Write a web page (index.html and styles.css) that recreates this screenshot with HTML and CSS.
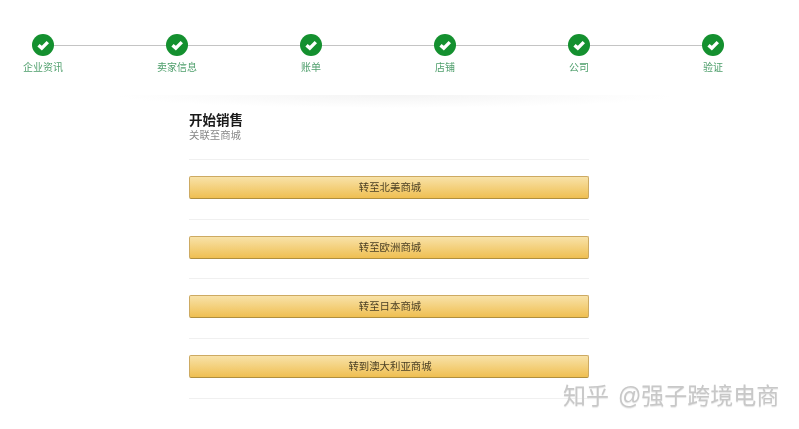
FILE: index.html
```html
<!DOCTYPE html>
<html lang="zh-CN">
<head>
  <meta charset="UTF-8">
  <meta name="viewport" content="width=device-width, initial-scale=1.0">
  <title>开始销售</title>
  <link rel="stylesheet" href="styles.css">
</head>
<body>
  <div class="steps">
    <div class="step"><svg class="step_icon" viewBox="0 0 22 22"><circle cx="11" cy="11" r="11"/><path d="M6.5 11.2l3.3 2.9 6-6"/></svg><span>企业资讯</span></div>
    <div class="step"><svg class="step_icon" viewBox="0 0 22 22"><circle cx="11" cy="11" r="11"/><path d="M6.5 11.2l3.3 2.9 6-6"/></svg><span>卖家信息</span></div>
    <div class="step"><svg class="step_icon" viewBox="0 0 22 22"><circle cx="11" cy="11" r="11"/><path d="M6.5 11.2l3.3 2.9 6-6"/></svg><span>账单</span></div>
    <div class="step"><svg class="step_icon" viewBox="0 0 22 22"><circle cx="11" cy="11" r="11"/><path d="M6.5 11.2l3.3 2.9 6-6"/></svg><span>店铺</span></div>
    <div class="step"><svg class="step_icon" viewBox="0 0 22 22"><circle cx="11" cy="11" r="11"/><path d="M6.5 11.2l3.3 2.9 6-6"/></svg><span>公司</span></div>
    <div class="step"><svg class="step_icon" viewBox="0 0 22 22"><circle cx="11" cy="11" r="11"/><path d="M6.5 11.2l3.3 2.9 6-6"/></svg><span>验证</span></div>
  </div>

  <div class="shade"></div>

  <div class="panel">
    <h1 class="title">开始销售</h1>
    <p class="subtitle">关联至商城</p>
    <div class="market"><button class="market_btn">转至北美商城</button></div>
    <div class="market"><button class="market_btn">转至欧洲商城</button></div>
    <div class="market"><button class="market_btn">转至日本商城</button></div>
    <div class="market"><button class="market_btn">转到澳大利亚商城</button></div>
  </div>

  <div class="watermark"><span>知乎</span><span>@强子跨境电商</span></div>
</body>
</html>
```

FILE: styles.css
```css
* {
  box-sizing: border-box;
  font-family: "Liberation Sans", "Noto Sans CJK SC", sans-serif;
}

html, body {
  height: 100%;
}

body {
  margin: 0;
  background: #fff;
  position: relative;
  overflow: hidden;
}

.steps {
  display: flex;
  justify-content: space-between;
  width: 750px;
  margin-left: 3px;
  padding-top: 34px;
  filter: blur(0.4px);
}

.step {
  position: relative;
  display: flex;
  flex-direction: column;
  align-items: center;
  width: 80px;
  color: #4f9f6c;
  font-size: 10px;
  line-height: 14px;
}

.step:not(:last-child)::after {
  content: "";
  position: absolute;
  top: 11px;
  left: 50%;
  width: 134px;
  height: 1px;
  background: #c4c4c4;
}

.step_icon {
  position: relative;
  z-index: 1;
  width: 22px;
  height: 22px;
  margin-bottom: 5px;
}

.step_icon circle {
  fill: #14902f;
}

.step_icon path {
  fill: none;
  stroke: #fff;
  stroke-width: 3.4;
}

.shade {
  width: 560px;
  height: 13px;
  margin: 20px 0 0 115px;
  background: radial-gradient(ellipse 50% 100% at 50% 0, #f4f4f4, #fff);
}

.panel {
  width: 400px;
  margin-left: 189px;
  margin-top: 5px;
  filter: blur(0.4px);
}

.title {
  margin: 0;
  color: #1a1a1a;
  font-size: 13.5px;
  line-height: 16px;
}

.subtitle {
  margin: 0;
  color: #888;
  font-size: 10.4px;
  line-height: 13px;
  padding-bottom: 17px;
}

.market {
  border-top: 1px solid #f0f0f0;
  padding: 16px 0 20px;
  height: 59.7px;
}

.market:last-child {
  border-bottom: 1px solid #f0f0f0;
  height: 60.7px;
}

.market_btn {
  display: block;
  width: 100%;
  height: 23px;
  padding: 0 0 2px 2px;
  border: 1px solid #cdaa62;
  border-bottom-color: #b08f3e;
  border-radius: 2px;
  background: linear-gradient(#f8e2a8, #efbf52);
  color: #4a3f24;
  font-size: 10.4px;
}

.watermark {
  position: absolute;
  left: 563px;
  top: 382px;
  display: flex;
  gap: 9px;
  color: #c8c8c8;
  font-size: 23px;
  line-height: 28px;
  text-shadow: 0 1px 1px #e4e4e4;
  filter: blur(0.3px);
}
```
